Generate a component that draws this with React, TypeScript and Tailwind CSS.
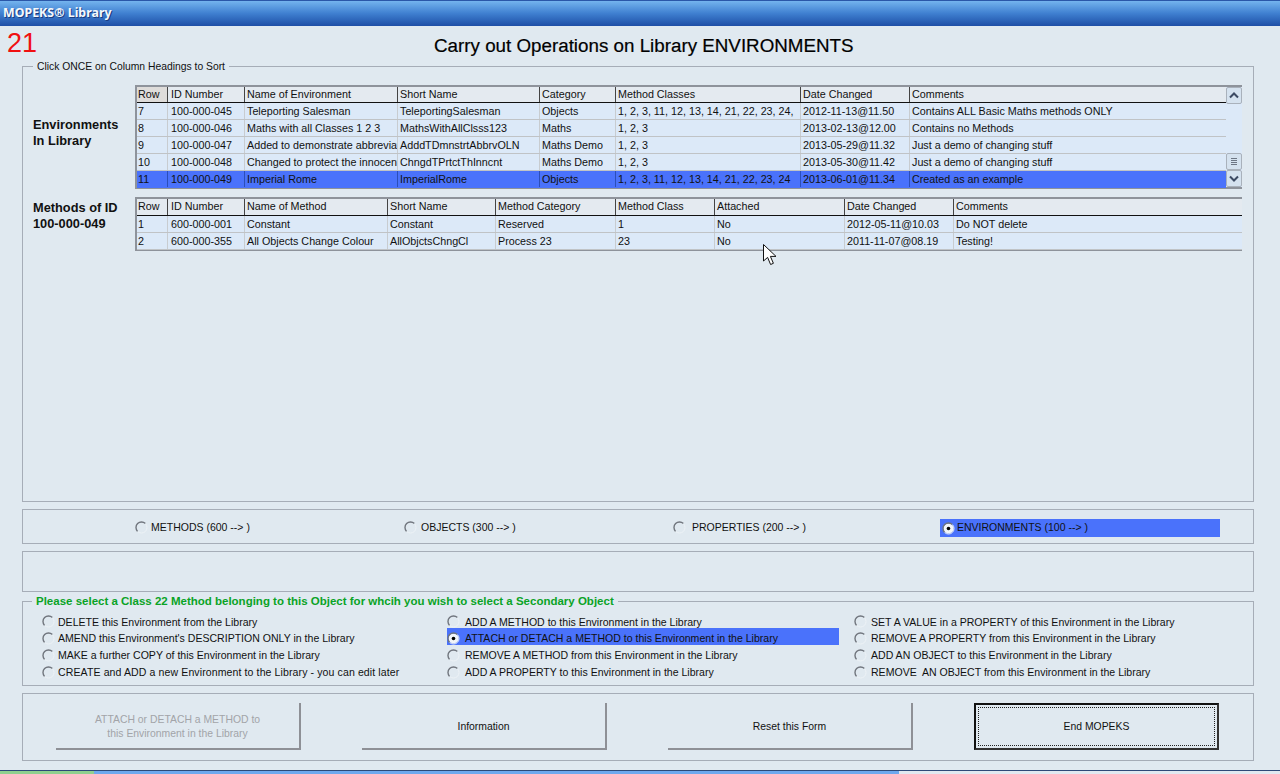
import React from "react";

const FONT = "[font-family:'Liberation_Sans',Arial,sans-serif]";

const envCols = "grid-cols-[31px_77px_153px_142px_76px_185px_109px_1fr]";
const methCols = "grid-cols-[31px_77px_143px_108px_120px_99px_130px_109px_1fr]";

const envHead = ["Row", "ID Number", "Name of Environment", "Short Name", "Category", "Method Classes", "Date Changed", "Comments"];
const envRows = [
  ["7", "100-000-045", "Teleporting Salesman", "TeleportingSalesman", "Objects", "1, 2, 3, 11, 12, 13, 14, 21, 22, 23, 24,", "2012-11-13@11.50", "Contains ALL Basic Maths methods ONLY"],
  ["8", "100-000-046", "Maths with all Classes 1 2 3", "MathsWithAllClsss123", "Maths", "1, 2, 3", "2013-02-13@12.00", "Contains no Methods"],
  ["9", "100-000-047", "Added to demonstrate abbreviations", "AdddTDmnstrtAbbrvOLN", "Maths Demo", "1, 2, 3", "2013-05-29@11.32", "Just a demo of changing stuff"],
  ["10", "100-000-048", "Changed to protect the innocent", "ChngdTPrtctThInncnt", "Maths Demo", "1, 2, 3", "2013-05-30@11.42", "Just a demo of changing stuff"],
  ["11", "100-000-049", "Imperial Rome", "ImperialRome", "Objects", "1, 2, 3, 11, 12, 13, 14, 21, 22, 23, 24", "2013-06-01@11.34", "Created as an example"],
];
const methHead = ["Row", "ID Number", "Name of Method", "Short Name", "Method Category", "Method Class", "Attached", "Date Changed", "Comments"];
const methRows = [
  ["1", "600-000-001", "Constant", "Constant", "Reserved", "1", "No", "2012-05-11@10.03", "Do NOT delete"],
  ["2", "600-000-355", "All Objects Change Colour", "AllObjctsChngCl", "Process 23", "23", "No", "2011-11-07@08.19", "Testing!"],
];

function cellPad(i: number) {
  return i === 0 ? "pl-[1px]" : i === 1 ? "pl-[3px]" : "pl-[2px]";
}

function Radio({ on = false }: { on?: boolean }) {
  return (
    <svg width="13" height="13" viewBox="0 0 13 13" className="shrink-0">
      {on && <circle cx="6.5" cy="6.5" r="5" fill="#f2f5f8" />}
      <path d="M2.6 10.4A5.5 5.5 0 0 1 10.4 2.6" fill="none" stroke="#70757d" strokeWidth="1.4" />
      <path d="M2.6 10.4A5.5 5.5 0 0 0 10.4 2.6" fill="none" stroke="#eef3f7" strokeWidth="1" />
      {on && <circle cx="6.5" cy="6.5" r="1.8" fill="#000" />}
    </svg>
  );
}

function Row({ cells, cols, selected }: { cells: string[]; cols: string; selected?: boolean }) {
  return (
    <div className={`grid ${cols} h-[17px] border-b ${selected ? "bg-[#4a72fb] border-[#4a72fb]" : "border-[#c0c3c6]"}`}>
      {cells.map((c, i) => (
        <div
          key={i}
          className={`overflow-hidden whitespace-nowrap leading-[16px] ${cellPad(i)} ${i === cells.length - 1 ? "" : "border-r"} ${selected ? "border-[#2c4fb8]" : "border-[#c8ccd0]"}`}
        >
          {c}
        </div>
      ))}
    </div>
  );
}

function Head({ cells, cols, h, firstGrey }: { cells: string[]; cols: string; h: string; firstGrey?: boolean }) {
  return (
    <div className={`grid ${cols} ${h} border-b border-[#111] bg-[#e4eaf0]`}>
      {cells.map((c, i) => (
        <div
          key={i}
          className={`overflow-hidden whitespace-nowrap leading-[15px] ${cellPad(i)} ${i === cells.length - 1 ? "" : "border-r border-[#444]"} ${firstGrey && i === 0 ? "bg-[#dedcda]" : ""}`}
        >
          {c}
        </div>
      ))}
    </div>
  );
}

function ScrollBtn({ kind }: { kind: "up" | "down" | "thumb" }) {
  return (
    <div className="w-[16px] h-[17px] rounded-[2px] border border-[#a9b1bb] bg-[#d5e2ef] flex items-center justify-center">
      <svg width="10" height="9" viewBox="0 0 10 9">
        {kind === "up" && <path d="M1 6.5 5 2.5 9 6.5" fill="none" stroke="#3c4a63" strokeWidth="2" />}
        {kind === "down" && <path d="M1 2.5 5 6.5 9 2.5" fill="none" stroke="#3c4a63" strokeWidth="2" />}
        {kind === "thumb" && <path d="M2 1.5H8M2 3.5H8M2 5.5H8M2 7.5H8" stroke="#6d7684" strokeWidth="1" />}
      </svg>
    </div>
  );
}

function Group({ className, children }: { className: string; children?: React.ReactNode }) {
  return <div className={`relative mx-[22px] w-[1232px] border border-[#a6adb7] ${className}`}>{children}</div>;
}

function Legend({ children, className = "" }: { children: React.ReactNode; className?: string }) {
  return (
    <div className={`absolute left-[9px] top-[-8px] px-[4px] h-[15px] leading-[15px] bg-[#e0e9f0] whitespace-nowrap ${className}`}>
      {children}
    </div>
  );
}

function Opt({ label, on, cls = "", gap = "ml-[4px]" }: { label: string; on?: boolean; cls?: string; gap?: string }) {
  return (
    <div className={`flex items-center whitespace-pre ${on ? "bg-[#4a72fb]" : ""} ${cls}`}>
      <Radio on={on} />
      <span className={gap}>{label}</span>
    </div>
  );
}

function Btn({ lines, disabled, focused, cls }: { lines: string[]; disabled?: boolean; focused?: boolean; cls: string }) {
  if (focused) {
    return (
      <div className={`h-[47px] w-[245px] border-2 border-[#111] border-r-[#333] border-b-[#333] p-[2px] ${cls}`}>
        <div className="h-full border border-dotted border-[#222] flex items-center justify-center">{lines[0]}</div>
      </div>
    );
  }
  return (
    <div
      className={`h-[47px] w-[245px] border-r-2 border-b-2 border-[#8e9096] flex flex-col items-center justify-center pt-[2px] leading-[14px] ${disabled ? "text-[#a2a4a8]" : ""} ${cls}`}
    >
      {lines.map((l) => (
        <div key={l}>{l}</div>
      ))}
    </div>
  );
}

const rowFirst = "h-[16px] pt-[3px] [&>span]:pt-[2px]";
const rowRest = "h-[17px] pt-[3px] [&>span]:pt-[2px]";

export default function App() {
  return (
    <div className={`relative w-[1280px] h-[774px] overflow-hidden flex flex-col bg-[#e0e9f0] text-[#111] text-[10.75px] ${FONT}`}>
      <div className="h-[26px] shrink-0 flex items-center pl-[3px] border-t border-[#2a57a8] bg-gradient-to-b from-[#74b4ee] via-[#3f7fd0] to-[#1f4fa6]">
        <span className="text-[#f4f8fc] font-bold text-[12.4px] [font-family:'Noto_Sans',sans-serif] [text-shadow:1px_1px_0_#1a3c80]">MOPEKS® Library</span>
      </div>

      <div className="h-[40px] shrink-0 flex items-center">
        <div className="w-[434px] pl-[7px] text-[27px] leading-[28px] text-[#f01010] self-start mt-[3px]">21</div>
        <div className="text-[18.8px] leading-[22px] text-black -mt-[1px] [-webkit-text-stroke:0.2px_#000]">Carry out Operations on Library ENVIRONMENTS</div>
      </div>

      <Group className="h-[436px]">
        <Legend className="text-[10.35px] left-[10px]">Click ONCE on Column Headings to Sort</Legend>
        <div className="pt-[18px] flex">
          <div className="w-[112px] shrink-0 pl-[10px] pt-[32px] font-bold text-[12.8px] leading-[16px]">
            Environments<br />In Library
          </div>
          <div className="w-[1107px] h-[104px] border-t-2 border-b-2 border-l-2 border-[#8e939b] bg-[#dce9f8] flex">
            <div className="w-[1089px]">
              <Head cells={envHead} cols={envCols} h="h-[16px]" firstGrey />
              {envRows.map((r, i) => (
                <Row key={r[0]} cells={r} cols={envCols} selected={i === 4} />
              ))}
            </div>
            <div className="w-[16px] flex flex-col">
              <ScrollBtn kind="up" />
              <div className="flex-1" />
              <ScrollBtn kind="thumb" />
              <ScrollBtn kind="down" />
            </div>
          </div>
        </div>
        <div className="pt-[8px] flex">
          <div className="w-[112px] shrink-0 pl-[10px] pt-[3px] font-bold text-[12.8px] leading-[16px]">
            Methods of ID<br />100-000-049
          </div>
          <div className="w-[1107px] h-[54px] border-t-2 border-b-2 border-l-2 border-[#8e939b] bg-[#dce9f8]">
            <Head cells={methHead} cols={methCols} h="h-[17px]" />
            {methRows.map((r) => (
              <Row key={r[0]} cells={r} cols={methCols} />
            ))}
          </div>
        </div>
      </Group>

      <Group className="h-[35px] mt-[7px] text-[10.5px]">
        <div className="grid grid-cols-[269px_269px_267px_1fr] pl-[112px] pt-[9px]">
          <Opt label="METHODS (600 --> )" cls="h-[17px]" gap="ml-[3px]" />
          <Opt label="OBJECTS (300 --> )" cls="h-[17px]" />
          <Opt label="PROPERTIES (200 --> )" cls="h-[17px]" gap="ml-[6px]" />
          <Opt label="ENVIRONMENTS (100 --> )" on cls="h-[18px] w-[280px] pl-[2px]" gap="ml-[2px]" />
        </div>
      </Group>

      <Group className="h-[41px] mt-[7px]" />

      <Group className="h-[85px] mt-[9px] text-[10.55px]">
        <Legend className="font-bold text-[#0aa326] text-[11.5px]">Please select a Class 22 Method belonging to this Object for whcih you wish to select a Secondary Object</Legend>
        <div className="grid grid-cols-[405px_407px_1fr] pl-[19px] pt-[10px]">
          <div>
            <Opt label="DELETE this Environment from the Library" cls={rowFirst} gap="ml-[3px]" />
            <Opt label="AMEND this Environment's DESCRIPTION ONLY in the Library" cls={rowRest} gap="ml-[3px]" />
            <Opt label="MAKE a further COPY of this Environment in the Library" cls={rowRest} gap="ml-[3px]" />
            <Opt label="CREATE and ADD a new Environment to the Library - you can edit later" cls={rowRest} gap="ml-[3px] tracking-[0.1px]" />
          </div>
          <div>
            <Opt label="ADD A METHOD to this Environment in the Library" cls={rowFirst} gap="ml-[5px]" />
            <Opt label="ATTACH or DETACH a METHOD to this Environment in the Library" on cls={`${rowRest} w-[392px]`} gap="ml-[5px]" />
            <Opt label="REMOVE A METHOD from this Environment in the Library" cls={rowRest} gap="ml-[5px]" />
            <Opt label="ADD A PROPERTY to this Environment in the Library" cls={rowRest} gap="ml-[5px]" />
          </div>
          <div>
            <Opt label="SET A VALUE in a PROPERTY of this Environment in the Library" cls={rowFirst} />
            <Opt label="REMOVE A PROPERTY from this Environment in the Library" cls={rowRest} />
            <Opt label="ADD AN OBJECT to this Environment in the Library" cls={rowRest} />
            <Opt label="REMOVE  AN OBJECT from this Environment in the Library" cls={rowRest} />
          </div>
        </div>
      </Group>

      <Group className="h-[68px] mt-[7px] text-[10.4px]">
        <div className="flex pl-[33px] pt-[9px]">
          <Btn lines={["ATTACH or DETACH a METHOD to", "this Environment in the Library"]} disabled cls="" />
          <Btn lines={["Information"]} cls="ml-[61px]" />
          <Btn lines={["Reset this Form"]} cls="ml-[61px]" />
          <Btn lines={["End MOPEKS"]} focused cls="ml-[61px]" />
        </div>
      </Group>

      <div className="mt-auto h-[4px] flex border-t border-[#2d4a78] bg-[#e0e9f0]">
        <div className="w-[94px] bg-[#8fd08f]" />
        <div className="w-[805px] bg-[#6ea8ee]" />
      </div>

      <svg className="absolute left-[763px] top-[244px]" width="15" height="22" viewBox="0 0 15 22">
        <path d="M0.5 0.5V17L4.6 13.4 7.6 20.5 10.4 19.3 7.4 12.4H13Z" fill="#fff" stroke="#111" strokeWidth="1" />
      </svg>
    </div>
  );
}
